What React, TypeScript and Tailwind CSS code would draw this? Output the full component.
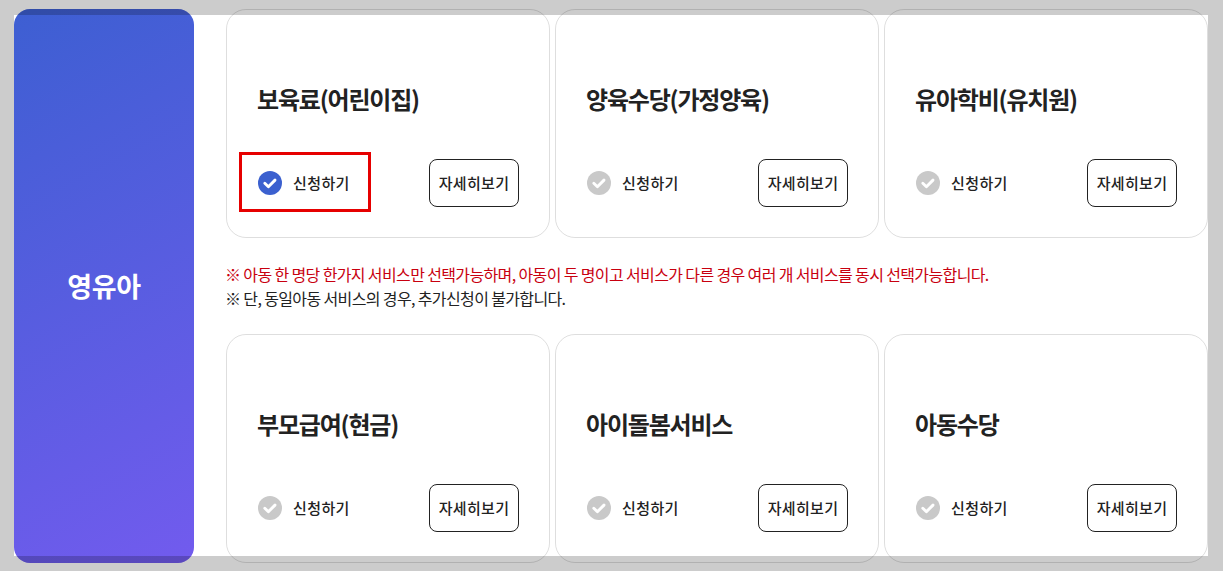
const FONT = "font-['Noto_Sans_CJK_KR','Noto_Sans',sans-serif]";

function Check({ active }: { active: boolean }) {
  return (
    <svg width="24" height="24" viewBox="0 0 24 24" className="shrink-0">
      <circle cx="12" cy="12" r="12" fill={active ? "#3b60cf" : "#c9c9c9"} />
      <path d="M6.8 12.2l3.6 3.5 6.6-6.6" fill="none" stroke="#fff" strokeWidth="2.9" strokeLinecap="round" strokeLinejoin="round" />
    </svg>
  );
}

function Card({ title, active = false }: { title: string; active?: boolean }) {
  return (
    <div className="flex h-[229px] flex-col rounded-[20px] border border-black/[0.13] p-[30px]">
      <h3 className="mt-[42px] text-[24px] leading-[34px] font-bold tracking-[-1.2px] text-[#222]">{title}</h3>
      <div className="mt-auto flex items-center justify-between">
        <label className="relative ml-px flex h-12 items-center gap-[11px] text-[15px] font-medium tracking-[0.4px] text-[#222]">
          <Check active={active} />
          <span>신청하기</span>
          {active && <span className="absolute -top-[7px] -left-[19px] h-[60px] w-[132px] border-[3px] border-[#e60000]" />}
        </label>
        <button className="h-12 w-[90px] rounded-lg border border-[#222] text-[15px] font-medium tracking-[0.3px] text-[#222]">자세히보기</button>
      </div>
    </div>
  );
}

export default function App() {
  return (
    <div className={`h-[571px] w-[1223px] overflow-hidden bg-[#cccccc] px-[14px] pt-[15px] ${FONT}`}>
      <div className="flex h-[541px] w-[1194px] items-start bg-white">
        <div className="-mt-[6px] flex h-[554px] gap-8">
          <aside className="relative flex w-[180px] items-center justify-center overflow-hidden rounded-2xl bg-linear-[152deg] from-[#3d5fd2] to-[#725bee] pt-[1px]">
            <h2 className="text-[27px] font-bold tracking-[-0.4px] text-white">영유아</h2>
            <span className="absolute inset-x-0 top-0 h-[6px] bg-black/20" />
            <span className="absolute inset-x-0 bottom-0 h-[7px] bg-black/20" />
          </aside>
          <main className="w-[982px]">
            <div className="grid grid-cols-3 gap-[5px]">
              <Card title="보육료(어린이집)" active />
              <Card title="양육수당(가정양육)" />
              <Card title="유아학비(유치원)" />
            </div>
            <div className="-ml-px flex h-[96px] flex-col justify-center text-[16px] leading-6 tracking-[-0.63px] text-[#222]">
              <p className="text-[#c8000f]">※ 아동 한 명당 한가지 서비스만 선택가능하며, 아동이 두 명이고 서비스가 다른 경우 여러 개 서비스를 동시 선택가능합니다.</p>
              <p>※ 단, 동일아동 서비스의 경우, 추가신청이 불가합니다.</p>
            </div>
            <div className="grid grid-cols-3 gap-[5px]">
              <Card title="부모급여(현금)" />
              <Card title="아이돌봄서비스" />
              <Card title="아동수당" />
            </div>
          </main>
        </div>
      </div>
    </div>
  );
}
